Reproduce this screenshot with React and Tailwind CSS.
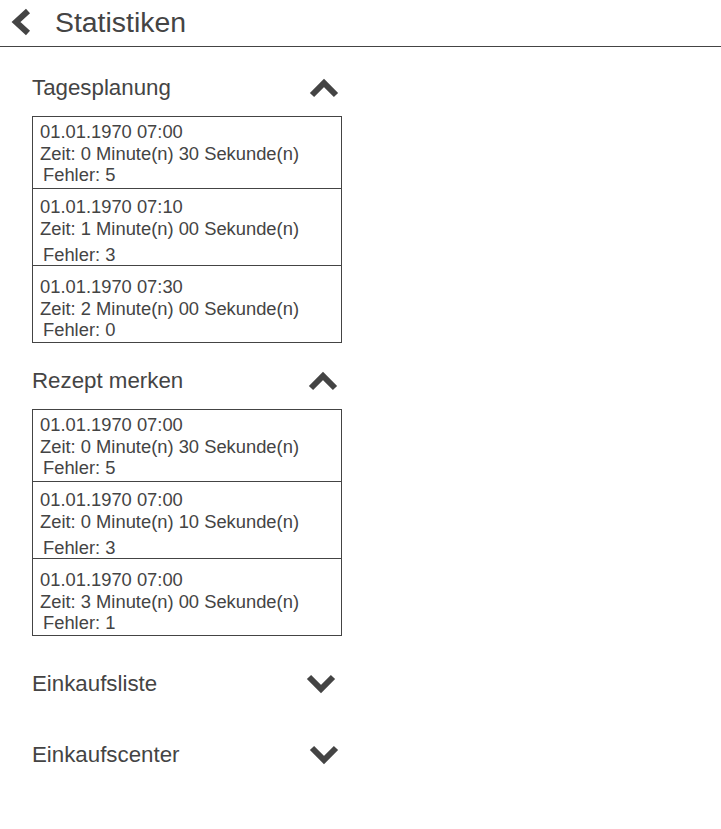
import React from "react";

// Per-row spacing mirrors the uneven layout of the original screen
const SECTIONS = [
    {
        title: "Tagesplanung",
        open: true,
        top: "mt-[19px]",
        chevron: "mr-[2px]",
        rows: [
            { date: "01.01.1970 07:00", min: 0, sec: "30", err: 5, box: "pt-[4px] pb-[3px]", gap: "" },
            { date: "01.01.1970 07:10", min: 1, sec: "00", err: 3, box: "pt-[7px] pb-0", gap: "mt-[5px]" },
            { date: "01.01.1970 07:30", min: 2, sec: "00", err: 0, box: "pt-[10px] pb-[2px]", gap: "" },
        ],
    },
    {
        title: "Rezept merken",
        open: true,
        top: "mt-[16px]",
        chevron: "mr-[3px]",
        rows: [
            { date: "01.01.1970 07:00", min: 0, sec: "30", err: 5, box: "pt-[4px] pb-[3px]", gap: "" },
            { date: "01.01.1970 07:00", min: 0, sec: "10", err: 3, box: "pt-[7px] pb-0", gap: "mt-[5px]" },
            { date: "01.01.1970 07:00", min: 3, sec: "00", err: 1, box: "pt-[10px] pb-[2px]", gap: "" },
        ],
    },
    { title: "Einkaufsliste", open: false, top: "mt-[26px]", chevron: "mr-[5px]", rows: [] },
    { title: "Einkaufscenter", open: false, top: "mt-[27px]", chevron: "mr-[2px]", rows: [] },
];

function Chevron({ up }) {
    return (
        <svg width="32" height="22" viewBox="0 0 32 22" className="text-[#444]">
            <polyline
                points={up ? "4,18 16,6 28,18" : "4,4 16,16 28,4"}
                fill="none"
                stroke="currentColor"
                strokeWidth="6"
                strokeLinejoin="miter"
            />
        </svg>
    );
}

function Row({ row, last }) {
    return (
        <div className={`pl-[7px] ${row.box} ${last ? "" : "border-b border-[#444]"}`}>
            <div className="leading-[22px]">{row.date}</div>
            <div className="leading-[22px]">
                Zeit: {row.min} Minute(n) {row.sec} Sekunde(n)
            </div>
            <div className={`leading-[20px] pl-[3px] ${row.gap}`}>Fehler: {row.err}</div>
        </div>
    );
}

function Section({ section }) {
    return (
        <div className={section.top}>
            <div className="h-[44px] flex items-center justify-between">
                <span className="text-[22.3px] mb-[1px]">{section.title}</span>
                <span className={section.chevron}>
                    <Chevron up={section.open} />
                </span>
            </div>
            {section.open && (
                <div className="mt-[6px] border border-[#444] text-[18.35px]">
                    {section.rows.map((row, i) => (
                        <Row key={i} row={row} last={i === section.rows.length - 1} />
                    ))}
                </div>
            )}
        </div>
    );
}

export default function App() {
    return (
        <div
            className="w-[721px] h-[829px] bg-white text-[#444]"
            style={{ fontFamily: '"Liberation Sans", Arial, sans-serif' }}
        >
            <header className="h-[47px] border-b border-[#444] flex items-center">
                <svg width="24" height="30" viewBox="0 0 24 30" className="ml-[8px] mb-[2px]">
                    <polyline points="20,4 8,15 20,26" fill="none" stroke="#444" strokeWidth="6" />
                </svg>
                <h1 className="ml-[23px] text-[28.4px] mb-[2px]">Statistiken</h1>
            </header>
            <main className="ml-[32px] w-[310px]">
                {SECTIONS.map((s) => (
                    <Section key={s.title} section={s} />
                ))}
            </main>
        </div>
    );
}
